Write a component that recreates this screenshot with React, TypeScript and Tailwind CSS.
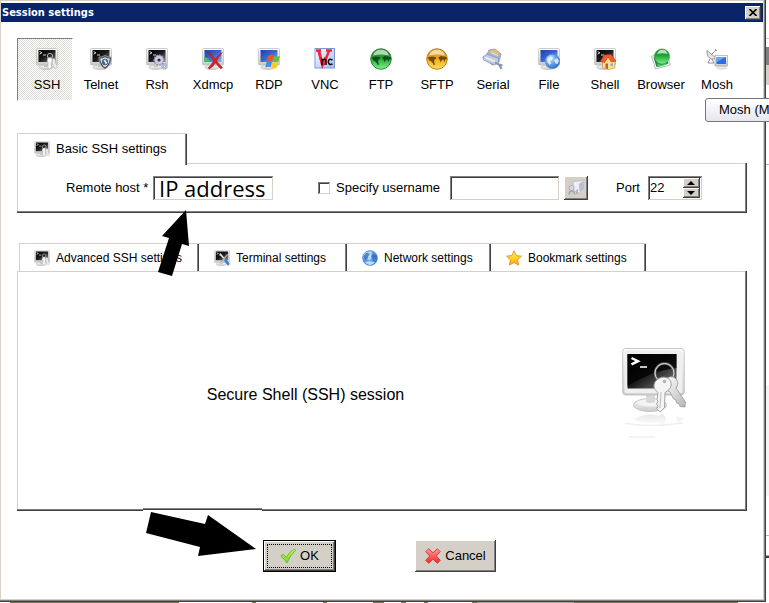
import React, { useState } from "react";

const sunken = "shadow-[inset_1px_1px_#808080,inset_-1px_-1px_#d4d0c8,inset_2px_2px_#404040]";
const raised = "shadow-[inset_-1px_-1px_#404040,inset_1px_1px_#fff,inset_-2px_-2px_#808080]";
const panel = "shadow-[inset_-1px_-1px_#404040,inset_-2px_-2px_#808080,inset_1px_1px_#d4d0c8]";

// region Icon parts
function Defs() {
    return (
        <svg className="absolute size-0" aria-hidden="true">
            <defs>
                <linearGradient id="frame" x1="0" y1="0" x2="0" y2="1">
                    <stop offset="0" stopColor="#ffffff" />
                    <stop offset="1" stopColor="#c9c9c9" />
                </linearGradient>
                <linearGradient id="dark" x1="0" y1="0" x2="1" y2="1">
                    <stop offset="0" stopColor="#000000" />
                    <stop offset="0.5" stopColor="#1c1c1c" />
                    <stop offset="1" stopColor="#8a8a8a" />
                </linearGradient>
                <linearGradient id="blue" x1="0" y1="0" x2="1" y2="1">
                    <stop offset="0" stopColor="#1c3fa8" />
                    <stop offset="0.5" stopColor="#3c66cf" />
                    <stop offset="1" stopColor="#8fb4f0" />
                </linearGradient>
                <linearGradient id="silver" x1="0" y1="0" x2="1" y2="1">
                    <stop offset="0" stopColor="#ffffff" />
                    <stop offset="1" stopColor="#b5b5b5" />
                </linearGradient>
                <linearGradient id="lilac" x1="0" y1="0" x2="1" y2="1">
                    <stop offset="0" stopColor="#ffffff" />
                    <stop offset="1" stopColor="#9fb9f2" />
                </linearGradient>
                <linearGradient id="greenBall" x1="0" y1="0" x2="0" y2="1">
                    <stop offset="0" stopColor="#1d7a2a" />
                    <stop offset="0.45" stopColor="#22a534" />
                    <stop offset="1" stopColor="#7cf58a" />
                </linearGradient>
                <linearGradient id="orangeBall" x1="0" y1="0" x2="0" y2="1">
                    <stop offset="0" stopColor="#c98210" />
                    <stop offset="0.45" stopColor="#f5a612" />
                    <stop offset="1" stopColor="#ffdf5c" />
                </linearGradient>
                <radialGradient id="blueBall" cx="0.35" cy="0.3" r="0.8">
                    <stop offset="0" stopColor="#d9efff" />
                    <stop offset="0.5" stopColor="#5e9fe6" />
                    <stop offset="1" stopColor="#2a65b8" />
                </radialGradient>
                <linearGradient id="star" x1="0" y1="0" x2="0" y2="1">
                    <stop offset="0" stopColor="#fff85a" />
                    <stop offset="1" stopColor="#ffa90a" />
                </linearGradient>
                <linearGradient id="tick" x1="0" y1="0" x2="0" y2="1">
                    <stop offset="0" stopColor="#c8f55a" />
                    <stop offset="1" stopColor="#7cd91a" />
                </linearGradient>
                <linearGradient id="cross" x1="0" y1="0" x2="0" y2="1">
                    <stop offset="0" stopColor="#ff9a90" />
                    <stop offset="1" stopColor="#f02828" />
                </linearGradient>
                <linearGradient id="fade" x1="0" y1="0" x2="0" y2="1">
                    <stop offset="0" stopColor="#cccccc" stopOpacity="0.5" />
                    <stop offset="1" stopColor="#eeeeee" stopOpacity="0.1" />
                </linearGradient>
            </defs>
        </svg>
    );
}

function Monitor({ screen = "url(#dark)" }: { screen?: string }) {
    return (
        <>
            <ellipse cx="10" cy="19.2" rx="7" ry="2.3" fill="url(#frame)" stroke="#b5b5b5" strokeWidth="0.6" />
            <path d="M8 16h4v3H8z" fill="#c5c5c5" />
            <rect x="0.5" y="0.5" width="21" height="16.5" rx="1" fill="url(#frame)" stroke="#c0c0c0" strokeWidth="0.8" />
            <rect x="2.500" y="2" width="17" height="12" fill={screen} />
        </>
    );
}

function Prompt() {
    return <path d="M3.5 3.5l2.5 1.3-2.5 1.4M7 7h3" fill="none" stroke="#fff" strokeWidth="0.8" />;
}

function Svg({ className = "size-[22px]", children }: { className?: string; children: React.ReactNode }) {
    return (
        <svg viewBox="0 0 22 22" className={`shrink-0 ${className}`} aria-hidden="true">
            {children}
        </svg>
    );
}

function SshIcon({ className }: { className?: string }) {
    return (
        <Svg className={className}>
            <Monitor />
            <Prompt />
            <circle cx="14" cy="8" r="2.600" fill="none" stroke="#b5b5b5" strokeWidth="1" />
            <path d="M11.500 10.500q2.500-2 4.500 0l.3 3-1 1v5l-1.500 1.500-2-1.500.4-5-1-1z" fill="#fafafa" stroke="#a5a5a5" strokeWidth="0.5" />
            <path d="M16.500 10.500q2.500-.5 3 1.500l-.3 2.500 2.300 4.500-1.500 1.500-1.800-.8-2-5z" fill="#efefef" stroke="#a5a5a5" strokeWidth="0.5" />
        </Svg>
    );
}

function TelnetIcon() {
    return (
        <Svg>
            <Monitor />
            <Prompt />
            <path d="M15 7.500q3 2 6.200 1.500.5 8-6.200 12.200Q8.500 17 9 9q3 .5 6-1.500z" fill="#4c4c4c" stroke="#a9a9a9" strokeWidth="0.8" />
            <path d="M15 9.300q2.300 1.200 4.700 1.200 0 5.500-4.700 8.800-4.700-3.300-4.600-8.800 2.300 0 4.600-1.200z" fill="#dcdfe5" />
            <circle cx="15" cy="14" r="3.200" fill="#41669f" />
            <path d="M13.500 12.500l2-1 .5 2 1.500 1-2 2-.5-2z" fill="#e9f1ff" />
        </Svg>
    );
}

function RshIcon() {
    return (
        <Svg>
            <Monitor />
            <Prompt />
            <circle cx="13" cy="12" r="4.700" fill="#b4b6d2" stroke="#9092b4" strokeWidth="1.800" strokeDasharray="1.600 1.100" />
            <circle cx="13" cy="12" r="4.300" fill="#c8cae2" />
            <circle cx="13" cy="12" r="1.600" fill="#333" />
            <circle cx="18.500" cy="18.500" r="2.600" fill="#cfd4ee" stroke="#8d96c8" strokeWidth="1.300" strokeDasharray="1.200 .8" />
            <circle cx="18.500" cy="18.500" r="1" fill="#fff" stroke="#6974a8" strokeWidth="0.5" />
        </Svg>
    );
}

function XdmcpIcon() {
    return (
        <Svg>
            <Monitor screen="url(#blue)" />
            <path d="M2.500 9l4 1.500 1.500 3.500H2.500z" fill="#35c653" />
            <path d="M6.500 4.500l2.500 1 4 5.500q4-5 7.500-6.500-3.800 4-5.800 8.500 3 4 6 6.500l-2 1.500-5.200-6q-3 4-6 6l-1.500-1q3.500-3.500 5.500-7-3-4-5-8.500z" fill="#dc1f1f" stroke="#9a1717" strokeWidth="0.4" />
        </Svg>
    );
}

function RdpIcon() {
    return (
        <Svg>
            <Monitor screen="url(#blue)" />
            <path d="M10 8.500q3-2.500 5.500-.8l-1.300 5.500q-2.500-1.200-5.500.5z" fill="#e9582a" />
            <path d="M16 8q2.500 1.400 5.800-.2l-1.300 5.700q-3 1.500-5.700 0z" fill="#6cbb32" />
            <path d="M8.500 14.300q2.700-1.700 5.500-.5l-1.300 5.400q-2.700-1.300-5.500.4z" fill="#3f8fe3" />
            <path d="M14.500 14.100q2.700 1.300 5.800 0l-1.300 5.500q-3 1.700-5.800 0z" fill="#fcc927" />
        </Svg>
    );
}

function VncIcon() {
    return (
        <Svg>
            <rect x="1" y="0.5" width="19.500" height="19.500" fill="url(#lilac)" stroke="#7f96d8" />
            <path d="M2 2.500h5M12 2.500h6M4.500 3l4 14.500M15 3L9.500 17" fill="none" stroke="#e8283c" strokeWidth="2.400" />
            <path d="M5 3l3.500 14L12 9" fill="none" stroke="#e8283c" strokeWidth="2.800" />
            <path d="M8 10.500v6.500M8 12.500q3.500-2.500 4 0v4.500M18.500 12q-4-2-4.200 1.700.3 3.800 4.200 2.300" fill="none" stroke="#111" strokeWidth="1.600" />
        </Svg>
    );
}

function BallIcon({ fill, edge, land }: { fill: string; edge: string; land: string }) {
    return (
        <Svg>
            <circle cx="11" cy="11" r="10.300" fill={fill} stroke={edge} strokeWidth="0.9" />
            <path d="M1.500 9.500l4-1 4 .5 1 1.500-2 1-.5 2.500 1 2-1 1.500-2-3.500-2.500-1.500z" fill={land} opacity="0.85" />
            <path d="M12 9.500l3-1.500 5.500 1 .5 2.500-1.500-.5-1 3-1.200-2.500-1.500.5-1 2.500-1-2.500z" fill={land} opacity="0.85" />
            <path d="M3 7.500Q5 1.500 11 1.500T19 7.500Q11 5.500 3 7.500z" fill="#fff" opacity="0.65" />
        </Svg>
    );
}

function SerialIcon() {
    return (
        <Svg>
            <path d="M3 10l4-8 6-1 6 5-2 8-7 3z" fill="#a7b5d0" stroke="#8a97b6" strokeWidth="0.8" />
            <path d="M6.500 3L13 1.500l4.500 3.500-2 1.500L9 4z" fill="#efbb5f" />
            <path d="M.8 9l4-3 12 4.500-.5 4-4 2.500L1.500 12z" fill="#c3cde2" stroke="#8492b4" strokeWidth="0.8" />
            <path d="M3 9.500l10 4" stroke="#eef2fa" strokeWidth="1.400" />
            <path d="M9 4.500l7 3" stroke="#dfe6f3" strokeWidth="1.200" />
            <path d="M13 14.500l4 2 2.500 4.500M17 16.500l3.500 1" fill="none" stroke="#8797b8" strokeWidth="2.200" />
        </Svg>
    );
}

function FileIcon() {
    return (
        <Svg>
            <Monitor screen="url(#blue)" />
            <circle cx="14.500" cy="13.500" r="7.300" fill="url(#blueBall)" stroke="#5b92d9" strokeWidth="0.6" />
            <path d="M9 11l3-2.500 3 .5-1 2.500-2 1 1 3-1.500 1.500L9.500 14zM16 12l3-2 2 3-1.500 3-2-.5z" fill="#e6f4ff" opacity="0.85" />
        </Svg>
    );
}

function ShellIcon() {
    return (
        <Svg>
            <Monitor />
            <Prompt />
            <path d="M8.500 12.500l5-4 7.500 4V20l-6 1.500L8.500 20z" fill="#ffdf8a" stroke="#b57a3a" strokeWidth="0.5" />
            <path d="M6.500 13.500l3.500-6.500 7-.5 5 6.500-4.500 1-3.500-5-3.500 5.500z" fill="#f45a30" stroke="#b53a1a" strokeWidth="0.6" />
            <path d="M11.500 15.500h2.500V21l-2.500-.7z" fill="#c8573a" />
            <path d="M16.500 15.500h2.500v2.500h-2.500z" fill="#7db3e8" />
        </Svg>
    );
}

function BrowserIcon() {
    return (
        <Svg>
            <path d="M1.500 8l15.500-2 3.500 11-15 4z" fill="#f5f7fa" stroke="#a5adb5" strokeWidth="0.8" />
            <path d="M3.500 9.500l12-2 3 8-12 3.500z" fill="#39745a" />
            <circle cx="12" cy="8.500" r="7.600" fill="url(#greenBall)" stroke="#22a534" strokeWidth="0.6" />
            <path d="M7 6q1.500-4.500 5.500-4.300 4 0 5 4.300-5-1.500-10.500 0z" fill="#fff" opacity="0.7" />
            <path d="M7 15.500q5 2.500 9-.500l1 1.500-9 2.800z" fill="#45d055" />
        </Svg>
    );
}

function MoshIcon() {
    return (
        <Svg>
            <path d="M1 2.500q-.5 7 4.500 8.500 3 .5 4.500-1z" fill="#e5e5e5" stroke="#888" strokeWidth="0.8" />
            <path d="M5 7l5-5M9 1l2 2M4 11l-2 4h6l-2-4" fill="none" stroke="#909090" strokeWidth="1" />
            <ellipse cx="15.500" cy="19.500" rx="5" ry="1.600" fill="#ececec" stroke="#b5b5b5" strokeWidth="0.5" />
            <rect x="9" y="7.500" width="12.500" height="10.500" fill="url(#frame)" stroke="#a8a8a8" strokeWidth="0.7" />
            <rect x="10.500" y="9" width="9.500" height="7" fill="#2a6fe0" />
            <path d="M10.500 9H20l-9.500 5z" fill="#6da4f4" />
        </Svg>
    );
}

function TerminalIcon({ className }: { className?: string }) {
    return (
        <Svg className={className}>
            <Monitor />
            <Prompt />
            <path d="M8 5l7 8" stroke="#dedede" strokeWidth="2.200" />
            <path d="M19 6l-9 10" stroke="#aaa" strokeWidth="2" />
            <path d="M15 13.500l5.500 7" stroke="#2e83d8" strokeWidth="3.500" />
        </Svg>
    );
}

function NetworkIcon({ className }: { className?: string }) {
    return (
        <Svg className={className}>
            <circle cx="11" cy="11" r="10.300" fill="url(#blueBall)" stroke="#4f86cf" strokeWidth="0.8" />
            <path d="M2 9l4-5 4-.5 1 3-3 2 1 2-3 2 .5 3-2.500-2zM12 9l4-4.500 4 4-.5 4-2.500-1-1 4-2-4z" fill="#2e66b5" opacity="0.75" />
            <path d="M8 3l6-1-2 4 1 5-3 4-2-4 3-3z" fill="#d8edff" opacity="0.6" />
            <path d="M4 17q7-3 14 0-3 4-7 4t-7-4z" fill="#d5f0ff" opacity="0.8" />
        </Svg>
    );
}

function StarIcon({ className }: { className?: string }) {
    return (
        <Svg className={className}>
            <path d="M11 1l3 6.700 7.200.8-5.300 5 1.500 7.300L11 17.200l-6.400 3.600 1.500-7.300-5.300-5L8 7.700z" fill="url(#star)" stroke="#ec8a1a" strokeWidth="1.200" strokeLinejoin="round" />
        </Svg>
    );
}

function UserIcon() {
    return (
        <Svg className="size-4">
            <path d="M7 2l14-1v11l-6 6-8-4z" fill="#eeeef8" stroke="#b5b6c8" />
            <path d="M15 5l6-3v10l-5 5z" fill="#b9bbd2" />
            <circle cx="5" cy="11" r="3.500" fill="#d8d9e6" stroke="#9b9cb0" />
            <path d="M1 20q1-5 4-5 4 0 4 5M13 13l-1 6" fill="none" stroke="#a4a5b9" strokeWidth="2" />
        </Svg>
    );
}

// Large monitor with keys and its reflection
function SessionPicture() {
    return (
        <svg viewBox="0 0 66 94" className="h-[94px] w-[66px]" aria-hidden="true">
            <ellipse cx="28" cy="57" rx="16.500" ry="6.500" fill="url(#frame)" stroke="#c4c4c4" />
            <ellipse cx="28" cy="55" rx="12" ry="3.500" fill="#f4f4f4" />
            <path d="M24 46h9v8q-4.500 2-9 0z" fill="#d8d8d8" />
            <rect x="0.700" y="0.500" width="61.500" height="46.500" rx="3" fill="url(#frame)" stroke="#c4c4c4" />
            <rect x="2.500" y="2.200" width="58" height="43" rx="2" fill="#efefef" />
            <rect x="5.500" y="6" width="49" height="34.500" fill="url(#dark)" />
            <path d="M54.500 6v14Q32 22 5.500 38V6z" fill="#000" opacity="0.75" />
            <path d="M9.500 10l6.500 3.200-6.500 3.200" fill="none" stroke="#fff" strokeWidth="2.400" />
            <path d="M18 19h7" stroke="#ddd" strokeWidth="1.800" />
            <circle cx="42.500" cy="25" r="9.500" fill="none" stroke="#666" strokeWidth="2.400" />
            <circle cx="42.500" cy="25" r="9.500" fill="none" stroke="#ddd" strokeWidth="1" />
            <path d="M45 30q6-3 9.500 1.500 3 4-.5 8.500l9.500 14-.5 5-5-.5-1-3-2.500-.5-.5-3-2.500-1-3.500-7-4-2q-3-7 1-12z" fill="url(#silver)" stroke="#9a9a9a" strokeWidth="0.8" />
            <path d="M36 31q6-4 11.500.5 4.500 6-2 11.500l-2.500 1.500-.5 15-4 4.500-4-3 1.500-3-1.500-2 1.500-2.500-1-2 1-7q-5-3-4-7.500.5-4 4-6z" fill="#f5f5f5" stroke="#9a9a9a" strokeWidth="0.9" />
            <circle cx="42.500" cy="33.500" r="2.300" fill="#b5b5b5" stroke="#fff" strokeWidth="0.800" />
            <path d="M39 44l-1 16" stroke="#c5c5c5" strokeWidth="1.200" />
            <path d="M12 71q16-9 32 0-5 4-16 4t-16-4zM36 69l4-4 4 5-3 10-4-1zM54 69l8 1-7 7z" fill="url(#fade)" />
            <path d="M3 75q20 5 58 0M7 89h26" fill="none" stroke="#f0f0f0" strokeWidth="1.500" />
        </svg>
    );
}

// region Data
const sessions: { name: string; icon: React.ReactNode }[] = [
    { name: "SSH", icon: <SshIcon /> },
    { name: "Telnet", icon: <TelnetIcon /> },
    { name: "Rsh", icon: <RshIcon /> },
    { name: "Xdmcp", icon: <XdmcpIcon /> },
    { name: "RDP", icon: <RdpIcon /> },
    { name: "VNC", icon: <VncIcon /> },
    { name: "FTP", icon: <BallIcon fill="url(#greenBall)" edge="#2b7a35" land="#0c3d16" /> },
    { name: "SFTP", icon: <BallIcon fill="url(#orangeBall)" edge="#b87912" land="#5a3c08" /> },
    { name: "Serial", icon: <SerialIcon /> },
    { name: "File", icon: <FileIcon /> },
    { name: "Shell", icon: <ShellIcon /> },
    { name: "Browser", icon: <BrowserIcon /> },
    { name: "Mosh", icon: <MoshIcon /> },
];

const tabs = [
    { name: "Advanced SSH settings", icon: <SshIcon className="size-4" />, style: "w-[180px] border-l pl-3.5" },
    { name: "Terminal settings", icon: <TerminalIcon className="size-4" />, style: "w-[148px] pl-[15px]" },
    { name: "Network settings", icon: <NetworkIcon className="size-4" />, style: "w-[144px] pl-[15px]" },
    { name: "Bookmark settings", icon: <StarIcon className="size-4" />, style: "w-[155px] pl-[15px]" },
];

// region Window parts
function TitleBar() {
    return (
        <header className="flex h-[19px] items-center justify-between bg-[#0a246a] pr-0.5 pl-px">
            <h1 className="font-['DejaVu_Sans_Condensed',sans-serif] text-[11px] leading-4 font-bold text-white">Session settings</h1>
            <button aria-label="Close" className={`flex h-3.5 w-4 items-center justify-center bg-[#d4d0c8] ${raised}`}>
                <svg viewBox="0 0 8 7" className="h-[7px] w-2" aria-hidden="true">
                    <path d="M.5 0l7 7M7.500 0l-7 7" stroke="#000" strokeWidth="1.600" />
                </svg>
            </button>
        </header>
    );
}

function Toolbar({ active, onSelect }: { active: string; onSelect: (name: string) => void }) {
    return (
        <nav className="flex">
            {sessions.map(({ name, icon }) => (
                <div key={name} className="relative">
                    <button
                        onClick={() => onSelect(name)}
                        className={`flex h-[63px] w-14 flex-col items-center border pt-[9px] ${
                            active === name
                                ? "border-t-[#808080] border-r-white border-b-white border-l-[#808080] bg-[repeating-conic-gradient(#dcddd5_0_25%,#fff_0_50%)] bg-[length:2px_2px] pl-1"
                                : "border-transparent"
                        }`}
                    >
                        {icon}
                        <span className="mt-[5px] text-[13px] leading-5">{name}</span>
                    </button>
                    {name === "Mosh" && (
                        <div
                            role="tooltip"
                            className="absolute top-[60px] left-4 z-20 h-6 w-20 rounded-[3px] border border-[#767676] bg-linear-to-b from-white to-[#e6e6f0] pl-[13px] text-[13px] leading-[22px] whitespace-nowrap"
                        >
                            Mosh (M
                        </div>
                    )}
                </div>
            ))}
        </nav>
    );
}

function BasicSettings() {
    const [useName, setUseName] = useState(false);
    const [port, setPort] = useState(22);
    return (
        <section className="relative mt-8 text-[13px]">
            <h2 className="relative z-10 -mb-0.5 flex h-8 w-[170px] items-center gap-1.5 border-t border-l border-[#d4d0c8] bg-white pb-0.5 pl-4 shadow-[inset_-1px_0_#404040,inset_-2px_0_#808080]">
                <SshIcon className="size-4" />
                Basic SSH settings
            </h2>
            <div className={`flex items-center py-[13px] pl-[49px] ${panel}`}>
                <label htmlFor="host" className="w-[87px]">Remote host *</label>
                <input
                    id="host"
                    defaultValue="IP address"
                    className={`h-6 w-[120px] bg-white pl-1.5 font-['Open_Sans',sans-serif] text-[22px] leading-6 outline-none ${sunken}`}
                />
                <input
                    id="use-name"
                    type="checkbox"
                    checked={useName}
                    onChange={(e) => setUseName(e.target.checked)}
                    className={`ml-[45px] size-3 appearance-none bg-white checked:bg-black ${sunken}`}
                />
                <label htmlFor="use-name" className="ml-1.5">Specify username</label>
                <input aria-label="Username" className={`ml-2.5 h-6 w-[109px] bg-white px-1 outline-none ${sunken}`} />
                <button aria-label="Choose user" className={`ml-[5px] flex size-6 items-center justify-center bg-[#d4d0c8] ${raised}`}>
                    <UserIcon />
                </button>
                <label htmlFor="port" className="ml-7">Port</label>
                <div className={`ml-2 flex h-6 w-[54px] bg-white p-0.5 ${sunken}`}>
                    <input
                        id="port"
                        value={port}
                        onChange={(e) => setPort(Number(e.target.value) || 0)}
                        className="w-full min-w-0 text-[13px] leading-5 outline-none"
                    />
                    <div className="flex w-[17px] shrink-0 flex-col">
                        <button aria-label="Increase port" onClick={() => setPort(port + 1)} className={`flex flex-1 items-center justify-center bg-[#d4d0c8] ${raised}`}>
                            <svg viewBox="0 0 8 4" className="h-1 w-2" aria-hidden="true"><path d="M4 0l4 4H0z" /></svg>
                        </button>
                        <button aria-label="Decrease port" onClick={() => setPort(port - 1)} className={`flex flex-1 items-center justify-center bg-[#d4d0c8] ${raised}`}>
                            <svg viewBox="0 0 8 4" className="h-1 w-2" aria-hidden="true"><path d="M4 4L0 0h8z" /></svg>
                        </button>
                    </div>
                </div>
            </div>
            {/* Arrow pointing at the host field */}
            <svg viewBox="0 0 33 67" className="absolute top-[77px] left-[140px] z-20 h-[67px] w-[33px]" aria-hidden="true">
                <path d="M29 0l3 36-7-2-10 32-14-4 11-34-7-2z" />
            </svg>
        </section>
    );
}

function DetailSettings() {
    return (
        <section className="mt-[30px] flex flex-1 flex-col">
            <div role="tablist" className="ml-0.5 flex">
                {tabs.map((tab) => (
                    <button
                        key={tab.name}
                        role="tab"
                        className={`flex h-7 items-center gap-1.5 border-t border-[#d4d0c8] text-xs whitespace-nowrap shadow-[inset_-1px_0_#404040,inset_-2px_0_#808080] ${tab.style}`}
                    >
                        {tab.icon}
                        {tab.name}
                    </button>
                ))}
            </div>
            <div className={`flex flex-1 items-center pt-2 pl-px ${panel}`}>
                <p className="flex-1 text-center text-base">Secure Shell (SSH) session</p>
                <div className="w-[154px] pl-[29px]">
                    <SessionPicture />
                </div>
            </div>
        </section>
    );
}

function Footer() {
    return (
        <footer className="relative flex items-center justify-center gap-[79px] pt-[29px] pr-[5px] pb-[27px] text-[13px]">
            <div className="absolute -top-[3px] left-[126px] h-[3px] w-[119px] bg-white shadow-[inset_0_1px_#808080,inset_0_2px_#404040]" />
            <svg viewBox="0 0 112 45" className="absolute top-px left-[128px] h-[45px] w-28" aria-hidden="true">
                <path d="M6 0l54 12 3-9 48 34-58 7 2-9L1 21z" />
            </svg>
            <button className="h-8 w-[73px] border border-black bg-[#d4d0c8] p-[3px] shadow-[inset_-1px_-1px_#404040,inset_1px_1px_#fff,inset_-2px_-2px_#808080]">
                <span className="flex h-full items-center justify-center gap-1 border border-dotted border-black">
                    <Svg className="size-4">
                        <path d="M1 11l3.500-2.500L8.500 13Q13 5 20 1.500l1.500 1.500Q14 10 9.500 20.500q-3.500-6-8.500-9.500z" fill="url(#tick)" stroke="#4fae1a" strokeWidth="1" />
                    </Svg>
                    OK
                </span>
            </button>
            <button className={`flex h-8 w-[81px] items-center justify-center gap-1 bg-[#d4d0c8] ${raised}`}>
                <Svg className="size-4">
                    <path d="M5 1l6 5.500L17 1l4 4-5.500 6 5.500 6-4 4-6-5.500L5 21l-4-4 5.500-6L1 5z" fill="url(#cross)" stroke="#cc2020" strokeWidth="1" strokeLinejoin="round" />
                </Svg>
                Cancel
            </button>
        </footer>
    );
}

// Slivers of the window behind, along the right and bottom edges
function BackdropRight() {
    return (
        <div className="w-[3px] shrink-0 bg-white">
            <div className="mt-[38px] h-[9px] border-t border-[#d4d0c8]" />
            <div className="h-[18px] bg-[#808080]" />
            <div className="h-5 bg-[#d4d0c8]" />
            <div className="mt-[79px] h-px bg-[#a9bcd6]" />
            <div className="mt-[220px] h-[111px] bg-[#f5f5f5]" />
            <div className="mt-[39px] h-px bg-[#a9bcd6]" />
            <div className="mt-[19px] h-[3px] border-b-2 border-[#404040] bg-[#b0b0b0]" />
        </div>
    );
}

function BackdropBottom() {
    return (
        <div className="flex h-px bg-white">
            <div className="ml-2.5 w-[169px] bg-[#7a774e]" />
            <div className="ml-[73px] w-1 bg-[#7a774e]" />
            <div className="ml-[67px] w-1 bg-[#7a774e]" />
            <div className="ml-[46px] w-[11px] bg-[#7a774e]" />
            <div className="ml-[17px] w-[5px] bg-[#7a774e]" />
            <div className="ml-[18px] w-1 bg-[#7a774e]" />
            <div className="ml-11 w-[5px] bg-[#7a774e]" />
            <div className="w-[97px] bg-[#aaa89c]" />
            <div className="w-[164px] bg-[#7a774e]" />
        </div>
    );
}

export default function App(): React.ReactNode {
    const [active, setActive] = useState("SSH");

    return (
        <div className="flex min-h-screen flex-col overflow-hidden bg-white font-['Liberation_Sans',Arial,sans-serif] text-black">
            <Defs />
            <div className="flex flex-1">
                <main className="flex flex-1 flex-col bg-white pt-[3px] pr-[3px] pb-[3px] pl-px shadow-[inset_-1px_-1px_#404040,inset_-2px_-2px_#808080,inset_-3px_-3px_#d4d0c8,inset_1px_1px_#d4d0c8]">
                    <TitleBar />
                    <div className="flex flex-1 flex-col px-4 pt-4">
                        <Toolbar active={active} onSelect={setActive} />
                        <BasicSettings />
                        <DetailSettings />
                        <Footer />
                    </div>
                </main>
                <BackdropRight />
            </div>
            <BackdropBottom />
        </div>
    );
}
